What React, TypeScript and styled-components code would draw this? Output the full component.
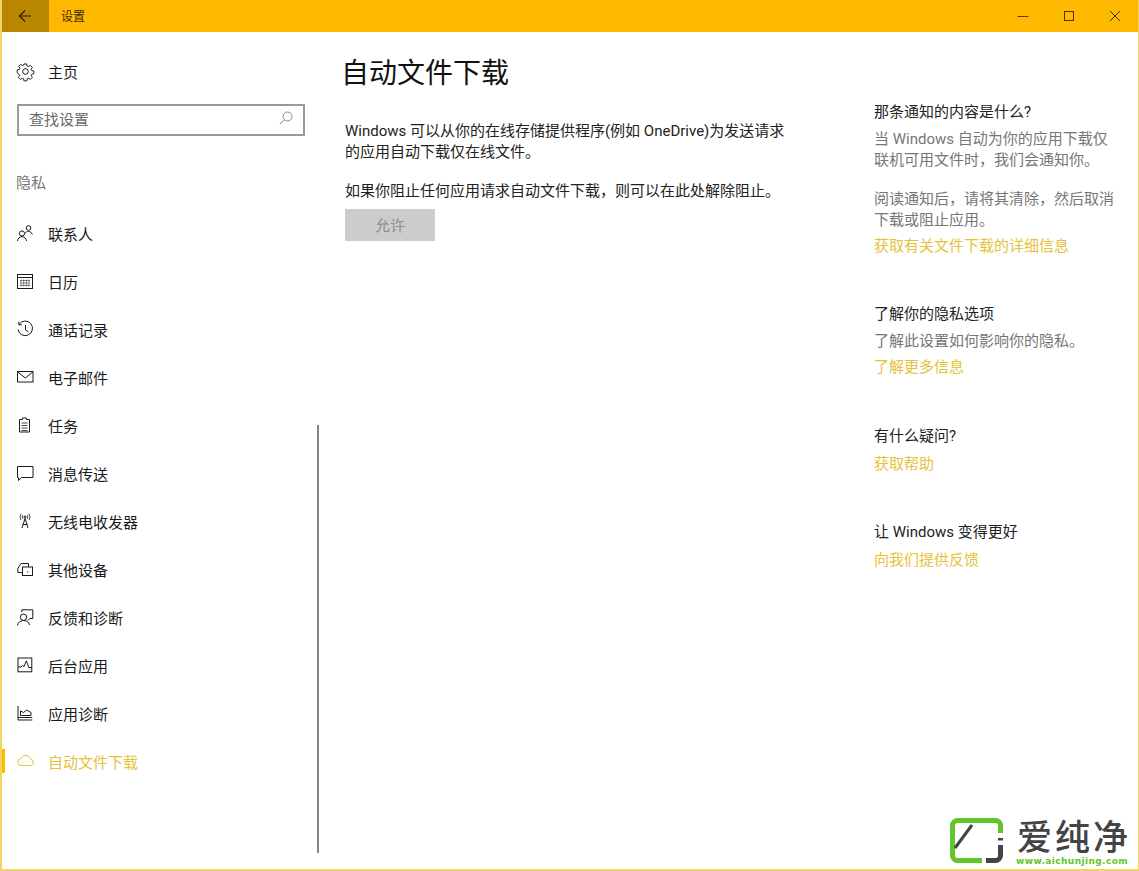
import React from "react";
import styled, { createGlobalStyle } from "styled-components";

const GlobalStyle = createGlobalStyle`
  html, body { margin: 0; padding: 0; background: #fff; }
  body {
    font-family: Roboto, "Noto Sans CJK SC", sans-serif;
    font-size: 15px;
    color: #1a1a1a;
  }
  * { box-sizing: border-box; }
`;

const NAV_ITEMS = [
  { label: "联系人", icon: "people" },
  { label: "日历", icon: "calendar" },
  { label: "通话记录", icon: "history" },
  { label: "电子邮件", icon: "mail" },
  { label: "任务", icon: "tasks" },
  { label: "消息传送", icon: "chat" },
  { label: "无线电收发器", icon: "radio" },
  { label: "其他设备", icon: "devices" },
  { label: "反馈和诊断", icon: "feedback" },
  { label: "后台应用", icon: "background" },
  { label: "应用诊断", icon: "diagnostics" },
  { label: "自动文件下载", icon: "cloud", active: true },
];

const SIDE_SECTIONS = [
  {
    title: "那条通知的内容是什么?",
    paragraphs: [
      ["当 Windows 自动为你的应用下载仅", "联机可用文件时，我们会通知你。"],
      ["阅读通知后，请将其清除，然后取消", "下载或阻止应用。"],
    ],
    link: "获取有关文件下载的详细信息",
  },
  {
    title: "了解你的隐私选项",
    paragraphs: [["了解此设置如何影响你的隐私。"]],
    link: "了解更多信息",
  },
  { title: "有什么疑问?", paragraphs: [], link: "获取帮助" },
  { title: "让 Windows 变得更好", paragraphs: [], link: "向我们提供反馈" },
];

const Icon: React.FC<{ name: string }> = ({ name }) => {
  const shapes: Record<string, React.ReactNode> = {
    gear: (
      <>
        <circle cx="8.5" cy="8.5" r="2.8" />
        <path d="M7 .8h3l.4 2.2 1.4.6 1.9-1.3 2.1 2.1-1.3 1.9.6 1.4 2.2.4v3l-2.2.4-.6 1.4 1.3 1.9-2.1 2.1-1.9-1.3-1.4.6-.4 2.2H7l-.4-2.2-1.4-.6-1.9 1.3-2.1-2.1 1.3-1.9-.6-1.4L0 10V7l2.2-.4.6-1.4-1.3-1.9 2.1-2.1 1.9 1.3 1.4-.6z" transform="translate(.2 .2) scale(.96)" />
      </>
    ),
    people: (
      <>
        <circle cx="11.5" cy="3" r="2.3" />
        <path d="M8 8.500c.6-1.300 2-2.100 3.500-2.100s3.200 1 3.800 3" />
        <circle cx="5" cy="8.500" r="2.600" />
        <path d="M.5 16c.3-2.600 2.100-4.300 4.500-4.300s4.200 1.700 4.500 4.300" />
      </>
    ),
    calendar: (
      <>
        <rect x=".5" y="1.500" width="15" height="14" />
        <path d="M.5 4.500h15" />
        <path d="M3 7.500h10M3 10h10M3 12.500h10M4 6.500v7M6.700 6.500v7M9.400 6.500v7M12 6.500v7" strokeWidth=".5" />
      </>
    ),
    history: (
      <>
        <path d="M2.200 3.200A7.300 7.300 0 1 1 1 8.500" />
        <path d="M1.800.8v3h3M8.500 4v4.800l3 2.200" />
      </>
    ),
    mail: (
      <>
        <rect x=".5" y="2.500" width="15.500" height="10.500" />
        <path d="M.8 3l7.500 6 7.500-6" />
      </>
    ),
    tasks: (
      <>
        <path d="M2.500 2.500h3V1h4v1.500h3V15h-10z" />
        <path d="M4.500 6h6M4.500 8.500h6M4.500 11h6M4.500 13.500h6" strokeWidth=".8" />
      </>
    ),
    chat: <path d="M.5 1.500h15.500v11H4.500l-3 3v-3h-1z" />,
    radio: (
      <>
        <path d="M8 5.500l-3 9.500M8 5.500l3 9.500M5.800 11.500h4.400" />
        <circle cx="8" cy="4" r="1" />
        <path d="M5.800 5.800a3 3 0 0 1 0-3.600M10.200 2.200a3 3 0 0 1 0 3.600M4 7a5.500 5.500 0 0 1 0-6.200M12 .8A5.500 5.500 0 0 1 12 7" strokeWidth=".8" />
      </>
    ),
    devices: (
      <>
        <path d="M5.500 11.500H.8V7.500l3.200-5h7.500V6" />
        <rect x="5.500" y="6" width="10" height="8.500" />
        <path d="M10 11h1.300" />
      </>
    ),
    feedback: (
      <>
        <circle cx="6.500" cy="8.200" r="3.200" />
        <path d="M.5 16.500c.3-3 2.800-5 6-5s5.500 1.500 6 4.500M4.800 3V.8h11v8.700h-3l-2 2" />
      </>
    ),
    background: (
      <>
        <rect x="1" y="1" width="13.800" height="13.800" />
        <path d="M1 10h3l1.500-1.500L7 9.500 9.300 3.800 11.800 10.500H14.800" />
      </>
    ),
    diagnostics: (
      <>
        <path d="M1 1v14h14.300M1 12.500h14.300" />
        <path d="M3.500 10.500V6l3 1.500L9.500 5l4.500 2.500v3z" />
      </>
    ),
    cloud: <path d="M4.500 12.500a3.500 3.500 0 0 1-.4-7A5 5 0 0 1 13.500 6a3.300 3.300 0 0 1 .2 6.500z" />,
  };
  return (
    <IconSvg viewBox="0 0 17 17" aria-hidden="true">
      {shapes[name]}
    </IconSvg>
  );
};

const App: React.FC = () => {
  return (
    <>
      <GlobalStyle />
      <Window>
        <TitleBar>
          <BackButton aria-label="back">
            <svg width="14" height="14" viewBox="0 0 14 14" fill="none" stroke="#2c2000" strokeWidth="1.2">
              <path d="M13 7H1.500M7 1.500L1.500 7 7 12.500" />
            </svg>
          </BackButton>
          <WindowTitle>设置</WindowTitle>
          <WindowControls>
            <ControlButton aria-label="minimize">
              <svg width="12" height="12" viewBox="0 0 12 12" stroke="#5c4300" fill="none">
                <path d="M.5 6.500h11" />
              </svg>
            </ControlButton>
            <ControlButton aria-label="maximize">
              <svg width="12" height="12" viewBox="0 0 12 12" stroke="#4a3500" fill="none">
                <rect x="1.500" y="1.500" width="9" height="9" />
              </svg>
            </ControlButton>
            <ControlButton aria-label="close">
              <svg width="12" height="12" viewBox="0 0 12 12" stroke="#4a3500" fill="none">
                <path d="M.8.8l10.400 10.400M11.200.8L.8 11.200" />
              </svg>
            </ControlButton>
          </WindowControls>
        </TitleBar>

        <Body>
          <Sidebar>
            <HomeRow>
              <Icon name="gear" />
              <span>主页</span>
            </HomeRow>
            <SearchBox>
              <SearchPlaceholder>查找设置</SearchPlaceholder>
              <svg width="14" height="14" viewBox="0 0 14 14" fill="none" stroke="#8a8a8a">
                <circle cx="8.500" cy="5.500" r="4.500" />
                <path d="M5.200 8.800L.8 13.200" />
              </svg>
            </SearchBox>
            <GroupLabel>隐私</GroupLabel>
            <NavList>
              {NAV_ITEMS.map((el) => (
                <NavItem key={el.label} $active={!!el.active}>
                  <Icon name={el.icon} />
                  <span>{el.label}</span>
                </NavItem>
              ))}
            </NavList>
            <ScrollThumb />
          </Sidebar>

          <Main>
            <PageTitle>自动文件下载</PageTitle>
            <Description $first>
              Windows 可以从你的在线存储提供程序(例如 OneDrive)为发送请求
              <br />
              的应用自动下载仅在线文件。
            </Description>
            <Description>如果你阻止任何应用请求自动文件下载，则可以在此处解除阻止。</Description>
            <AllowButton disabled>允许</AllowButton>
          </Main>

          <Aside>
            {SIDE_SECTIONS.map((el) => (
              <SideSection key={el.title}>
                <SideHeading>{el.title}</SideHeading>
                {el.paragraphs.map((lines) => (
                  <SideText key={lines[0]}>
                    {lines.map((line) => (
                      <div key={line}>{line}</div>
                    ))}
                  </SideText>
                ))}
                <SideLink>{el.link}</SideLink>
              </SideSection>
            ))}
          </Aside>
        </Body>

        <Watermark>
          <svg width="58" height="50" viewBox="0 0 58 50" fill="none">
            <path d="M52.500 17V9.500a5 5 0 0 0-5-5H9.500a5 5 0 0 0-5 5v30a5 5 0 0 0 5 5H34" stroke="#62c62a" strokeWidth="5" />
            <path d="M7 32L24 9" stroke="#444" strokeWidth="3" />
            <path d="M52.500 29v10.500a5 5 0 0 1-5 5H38M52.500 22v2.500" stroke="#444" strokeWidth="5" />
          </svg>
          <WatermarkText>
            <WatermarkName>爱纯净</WatermarkName>
            <WatermarkUrl>www.aichunjing.com</WatermarkUrl>
          </WatermarkText>
        </Watermark>
      </Window>
    </>
  );
};

const Window = styled.div`
  position: relative;
  width: 1139px;
  height: 871px;
  overflow: hidden;
  background: #fff;
  border-left: 2px solid #f3d463;
  border-right: 1px solid #f3d463;
  border-bottom: 2px solid #f3d463;
  display: flex;
  flex-direction: column;
`;

const TitleBar = styled.header`
  height: 32px;
  margin: 0 -1px 0 -2px;
  flex: none;
  display: flex;
  align-items: center;
  background: #ffb900;
`;

const BackButton = styled.button`
  width: 49px;
  height: 32px;
  border: 0;
  padding: 0;
  background: #b88600;
  display: flex;
  align-items: center;
  justify-content: center;
`;

const WindowTitle = styled.div`
  margin: -1px 0 0 12px;
  font-size: 12px;
  color: #3a2a00;
`;

const WindowControls = styled.div`
  margin-left: auto;
  padding-right: 1px;
  display: flex;
`;

const ControlButton = styled.button`
  width: 46px;
  height: 32px;
  border: 0;
  padding: 0;
  background: transparent;
  display: flex;
  align-items: center;
  justify-content: center;
`;

const Body = styled.div`
  flex: 1;
  display: grid;
  grid-template-columns: 341px 531px 1fr;
  min-height: 0;
`;

const Sidebar = styled.nav`
  position: relative;
`;

const IconSvg = styled.svg`
  width: 17px;
  height: 17px;
  flex: none;
  fill: none;
  stroke: currentColor;
  stroke-width: 1;
  overflow: visible;
`;

const HomeRow = styled.div`
  height: 48px;
  margin-top: 15px;
  display: flex;
  align-items: center;
  gap: 14px;
  padding-left: 15px;
`;

const SearchBox = styled.div`
  width: 288px;
  height: 32px;
  margin: 9px 0 0 15px;
  border: 2px solid #999;
  padding: 0 10px 4px;
  display: flex;
  align-items: center;
  justify-content: space-between;
`;

const SearchPlaceholder = styled.span`
  color: #6b6b6b;
`;

const GroupLabel = styled.div`
  margin: 36px 0 0 14px;
  line-height: 22px;
  color: #777;
`;

const NavList = styled.div`
  margin-top: 15px;
  display: flex;
  flex-direction: column;
`;

const NavItem = styled.div<{ $active: boolean }>`
  position: relative;
  height: 48px;
  display: flex;
  align-items: center;
  gap: 14px;
  padding-left: 15px;
  color: ${(p) => (p.$active ? "#e6c23a" : "#1a1a1a")};

  &::before {
    content: "";
    display: ${(p) => (p.$active ? "block" : "none")};
    position: absolute;
    left: -2px;
    top: 12px;
    width: 5px;
    height: 24px;
    background: #ffb900;
  }
`;

const ScrollThumb = styled.div`
  position: absolute;
  left: 315px;
  top: 393px;
  width: 2px;
  height: 428px;
  background: #858585;
`;

const Main = styled.main`
  padding: 22px 0 0;
`;

const PageTitle = styled.h1`
  margin: 0 0 0 -2px;
  font-size: 28px;
  font-weight: 400;
  line-height: 40px;
  color: #111;
`;

const Description = styled.p<{ $first?: boolean }>`
  margin: ${(p) => (p.$first ? "27px" : "18px")} 0 0 2px;
  line-height: 21px;
  white-space: nowrap;
  color: #222;
`;

const AllowButton = styled.button`
  display: block;
  width: 90px;
  height: 32px;
  margin: 7px 0 0 2px;
  border: 0;
  padding: 0 0 2px;
  font: inherit;
  color: #8f8f8f;
  background: #cccccc;
`;

const Aside = styled.aside`
  padding-top: 69px;
`;

const SideSection = styled.section`
  margin-bottom: 45px;

  &:nth-child(3) {
    margin-top: 46px;
  }
`;

const SideHeading = styled.div`
  line-height: 22px;
  color: #222;
`;

const SideText = styled.div`
  margin-top: 6px;
  line-height: 21px;
  color: #767676;

  & + & {
    margin-top: 18px;
  }
`;

const SideLink = styled.div`
  margin-top: 5px;
  line-height: 24px;
  color: #e6c23a;

  ${SideText} + & {
    margin-top: 3px;
  }
`;

const Watermark = styled.div`
  position: absolute;
  right: -1px;
  bottom: -2px;
  width: 195px;
  height: 60px;
  padding: 5px 11px 0 0;
  background: #fff;
  display: flex;
  gap: 10px;
  justify-content: flex-end;
`;

const WatermarkText = styled.div`
  padding-top: 5px;
  display: flex;
  flex-direction: column;
  align-items: center;
`;

const WatermarkName = styled.div`
  margin-right: -4px;
  font-family: "Liberation Sans", "Noto Sans CJK SC", sans-serif;
  font-size: 35px;
  line-height: 34px;
  letter-spacing: 3px;
  font-weight: 500;
  color: #444;
`;

const WatermarkUrl = styled.div`
  margin-top: 2px;
  font-family: "DejaVu Sans", sans-serif;
  font-size: 9px;
  line-height: 8px;
  font-weight: 700;
  letter-spacing: 0.4px;
  color: #62c62a;
`;

export default App;
